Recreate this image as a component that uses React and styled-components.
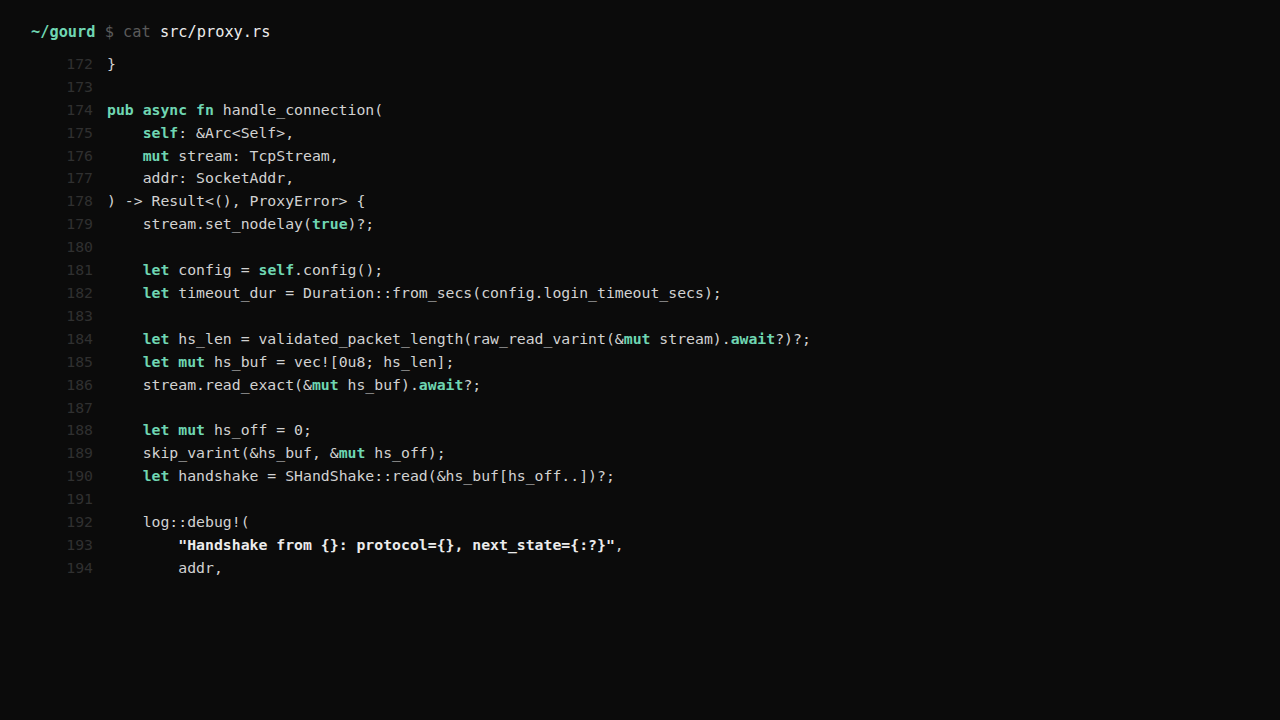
import React from 'react';
import styled, { createGlobalStyle } from 'styled-components';

const GlobalStyle = createGlobalStyle`
	html, body {
		margin: 0;
		padding: 0;
		background-color: #0b0b0b;
	}
`;

const Screen = styled.div`
	width: 1280px;
	height: 720px;
	box-sizing: border-box;
	padding: 21px 0 0 31px;
	background-color: #0b0b0b;
	font-family: 'DejaVu Sans Mono', 'Liberation Mono', monospace;
	font-size: 14.8px;
	line-height: 22.9px;
	color: #d2d2d2;
	overflow: hidden;
`;

const Prompt = styled.div`
	white-space: pre;
	font-size: 15.3px;
	margin-bottom: 9px;
`;

const Path = styled.span`
	color: #6fd6b2;
	font-weight: bold;
`;

const Muted = styled.span`
	color: #5a5a5a;
`;

const Command = styled.span`
	color: #ededed;
`;

const Listing = styled.div`
	display: flex;
	flex-direction: column;
`;

const Row = styled.div`
	display: grid;
	grid-template-columns: 62px 1fr;
	column-gap: 14px;
	white-space: pre;
`;

const LineNo = styled.span`
	color: #303030;
	text-align: right;
`;

const Token = styled.span`
	color: ${({ kind }) =>
		kind === 'kw' ? '#6fd6b2' : kind === 'str' ? '#ececec' : '#d2d2d2'};
	font-weight: ${({ kind }) => (kind === 'kw' || kind === 'str' ? 'bold' : 'normal')};
`;

const k = (t) => ['kw', t];
const p = (t) => ['plain', t];
const s = (t) => ['str', t];

const lines = [
	[172, [p('}')]],
	[173, []],
	[174, [k('pub async fn'), p(' handle_connection(')]],
	[175, [p('    '), k('self'), p(': &Arc<Self>,')]],
	[176, [p('    '), k('mut'), p(' stream: TcpStream,')]],
	[177, [p('    addr: SocketAddr,')]],
	[178, [p(') -> Result<(), ProxyError> {')]],
	[179, [p('    stream.set_nodelay('), k('true'), p(')?;')]],
	[180, []],
	[181, [p('    '), k('let'), p(' config = '), k('self'), p('.config();')]],
	[182, [p('    '), k('let'), p(' timeout_dur = Duration::from_secs(config.login_timeout_secs);')]],
	[183, []],
	[184, [p('    '), k('let'), p(' hs_len = validated_packet_length(raw_read_varint(&'), k('mut'), p(' stream).'), k('await'), p('?)?;')]],
	[185, [p('    '), k('let mut'), p(' hs_buf = vec![0u8; hs_len];')]],
	[186, [p('    stream.read_exact(&'), k('mut'), p(' hs_buf).'), k('await'), p('?;')]],
	[187, []],
	[188, [p('    '), k('let mut'), p(' hs_off = 0;')]],
	[189, [p('    skip_varint(&hs_buf, &'), k('mut'), p(' hs_off);')]],
	[190, [p('    '), k('let'), p(' handshake = SHandShake::read(&hs_buf[hs_off..])?;')]],
	[191, []],
	[192, [p('    log::debug!(')]],
	[193, [p('        '), s('"Handshake from {}: protocol={}, next_state={:?}"'), p(',')]],
	[194, [p('        addr,')]],
];

const App = () => {
	return (
		<>
			<GlobalStyle />
			<Screen>
				<Prompt>
					<Path>~/gourd</Path>
					<Muted> $ cat </Muted>
					<Command>src/proxy.rs</Command>
				</Prompt>
				<Listing>
					{lines.map(([n, parts]) => (
						<Row key={n}>
							<LineNo>{n}</LineNo>
							<span>
								{parts.map(([kind, text], i) => (
									<Token key={i} kind={kind}>
										{text}
									</Token>
								))}
							</span>
						</Row>
					))}
				</Listing>
			</Screen>
		</>
	);
};

export default App;
